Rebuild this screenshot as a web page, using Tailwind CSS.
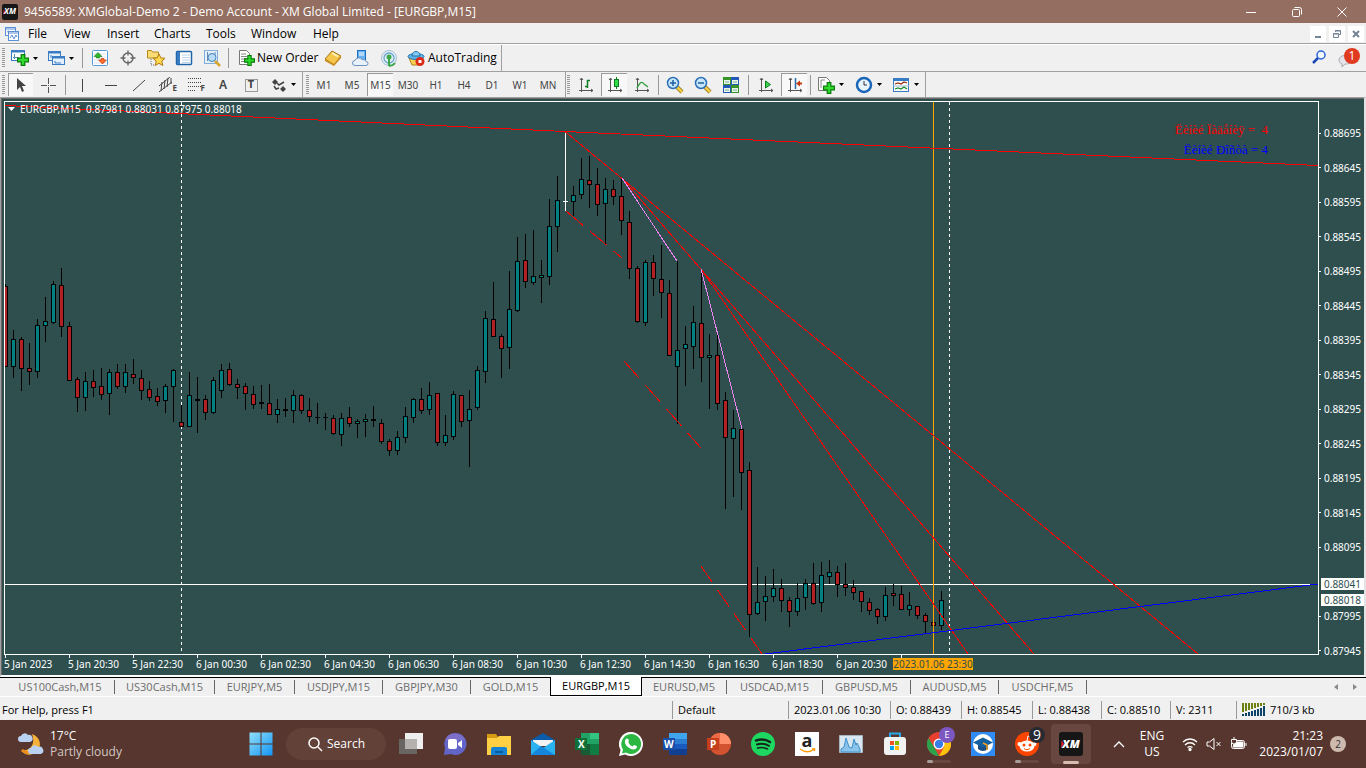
<!doctype html>
<html lang="en">
<head>
  <meta charset="UTF-8">
  <meta name="viewport" content="width=device-width, initial-scale=1.0">
  <title>9456589: XMGlobal-Demo 2 - Demo Account - XM Global Limited - [EURGBP,M15]</title>
  <script src="https://cdn.jsdelivr.net/npm/@tailwindcss/browser@4"></script>
</head>
<body class="flex h-screen flex-col overflow-hidden bg-[#f0f0f0] font-['Open_Sans','Noto_Sans',sans-serif] text-xs text-black">
  <!-- shared shapes -->
  <svg class="hidden">
    <symbol id="caret" viewBox="0 0 5 3"><path d="M0 0h5L2.500 3z"/></symbol>
    <symbol id="axes" viewBox="0 0 16 16"><path d="M3.500 1v14M1 13.500h14M2 3l1.500-2L5 3M13 12l2 1.500-2 1.500" fill="none" stroke="#555"/></symbol>
    <symbol id="plus" viewBox="0 0 10 10"><path d="M3.500.5h3v3h3v3h-3v3h-3v-3h-3v-3h3z" fill="#2edb2e" stroke="#087a08"/></symbol>
    <symbol id="xm" viewBox="0 0 24 24"><rect width="24" height="24" rx="3" fill="#161616"/><path d="M2.500 8l2.500 4-3 4z" fill="#e01f26"/></symbol>
  </svg>

  <!-- Title bar -->
  <header class="flex h-[23px] shrink-0 items-center bg-[#946e60] text-white">
    <div class="relative ml-0.5 mr-1.5 flex h-4 w-4 items-center justify-center">
      <svg class="absolute h-4 w-4"><use href="#xm"/></svg>
      <span class="relative text-[8px] font-bold italic">XM</span>
    </div>
    <h1 class="text-xs">9456589: XMGlobal-Demo 2 - Demo Account - XM Global Limited - [EURGBP,M15]</h1>
    <div class="ml-auto flex h-full">
      <button class="flex w-[46px] items-center justify-center" aria-label="Minimize"><svg class="h-3 w-3" fill="none" stroke="#fff"><path d="M1 6.500h10"/></svg></button>
      <button class="flex w-[46px] items-center justify-center" aria-label="Restore"><svg class="h-3 w-3" fill="none" stroke="#fff"><rect x="1.500" y="3.500" width="7" height="7" rx="1"/><path d="M3.500 1.500h5a2 2 0 0 1 2 2v5"/></svg></button>
      <button class="mr-0.5 flex w-11 items-center justify-center" aria-label="Close"><svg class="h-3 w-3" fill="none" stroke="#fff"><path d="M1.500 1.500l9 9M10.500 1.500l-9 9"/></svg></button>
    </div>
  </header>

  <!-- Menu -->
  <nav class="flex h-[22px] shrink-0 items-center border-b border-white shadow-[inset_0_-1px_0_#a0a0a0]">
    <svg class="mx-1 h-4 w-4" fill="#fff" stroke="#5b8fd8"><rect x="1.500" y="1.500" width="10" height="8"/><path d="M1 3h11M3 6l2-1 1 2"/><rect x="4.500" y="5.500" width="10" height="9"/><path d="M4 7h11M6 12l2-3 2 4 2-4 1 2" fill="none"/></svg>
    <button class="ml-1 w-[36px] text-left">File</button>
    <button class="w-[43px] text-left">View</button>
    <button class="w-[47px] text-left">Insert</button>
    <button class="w-[52px] text-left">Charts</button>
    <button class="w-[45px] text-left">Tools</button>
    <button class="w-[62px] text-left">Window</button>
    <button class="text-left">Help</button>
    <div class="ml-auto mr-0.5 flex gap-[3px]">
      <button class="flex h-4 w-4 items-center justify-center bg-white" aria-label="Minimize chart"><svg class="h-2 w-2"><path d="M1 6h6v2H1z" fill="#738496"/></svg></button>
      <button class="flex h-4 w-4 items-center justify-center bg-white" aria-label="Restore chart"><svg class="h-2 w-2" fill="none" stroke="#738496"><path d="M2.500 2V.5h5v4H6M2 1h6M.5 3.500h5v4h-5zM0 4h6"/></svg></button>
      <button class="flex h-4 w-4 items-center justify-center bg-white" aria-label="Close chart"><svg class="h-2 w-2" stroke="#738496" stroke-width="2"><path d="M1 1l6 6M7 1L1 7"/></svg></button>
    </div>
  </nav>

  <!-- Standard toolbar -->
  <div class="flex h-[27px] shrink-0 items-center border-b border-[#a0a0a0]">
    <div class="flex h-full items-center border-r border-[#a0a0a0]">
      <svg class="ml-0.5 h-5 w-[3px]"><path d="M1.500 0v20" stroke="#999" stroke-width="3" stroke-dasharray="1 1"/></svg>
      <button class="flex w-[38px] items-center gap-1 pl-1.5" aria-label="New chart">
        <svg class="h-[18px] w-[18px]"><rect x=".5" y="1.500" width="13" height="10" fill="#fff" stroke="#3a7cc4"/><path d="M0 2.500h14" stroke="#3a7cc4" stroke-width="2"/><path d="M3.500 5v5M2 8.500h6" stroke="#5b8bb0"/><use href="#plus" x="6" y="5" width="12" height="12"/></svg>
        <svg class="h-[3px] w-[5px]"><use href="#caret"/></svg>
      </button>
      <button class="flex w-9 items-center gap-1 pl-1" aria-label="Profiles">
        <svg class="h-[18px] w-[18px]" fill="#e4f1fd" stroke="#3a7cc4"><rect x="1.500" y="2.500" width="12" height="9"/><path d="M1 3.500h13" stroke-width="2"/><rect x="5.500" y="7.500" width="12" height="8"/><path d="M5 8.500h13" stroke-width="2"/><path d="M4 6v3M8 12v2h6"/></svg>
        <svg class="h-[3px] w-[5px]"><use href="#caret"/></svg>
      </button>
      <div class="mx-[3px] h-5 w-px bg-[#999]"></div>
      <button class="flex w-7 justify-center" aria-label="Market Watch"><svg class="h-[18px] w-[18px]"><rect x="1.500" y="1.500" width="15" height="15" rx="1" fill="#fff" stroke="#4f9bdc"/><path d="M3 5h12M3 8h12M3 11h12M3 14h12" stroke="#dde"/><path d="M7 3.500l4 4H8.500V9h-3V7.500H3z" fill="#2fb82f" stroke="#0a7a0a" stroke-width=".6"/><path d="M11.500 15l4-4H13V9.500h-3V11H7.500z" fill="#ff6a2a" stroke="#b83200" stroke-width=".6"/></svg></button>
      <button class="flex w-7 justify-center" aria-label="Data window"><svg class="h-[18px] w-[18px]" fill="none" stroke="#666"><circle cx="9" cy="9" r="5" stroke-width="1.500"/><path d="M9 1.500v5M9 11.500v5M1.500 9h5M11.500 9h5" stroke-width="1.300"/></svg></button>
      <button class="flex w-7 justify-center" aria-label="Navigator"><svg class="h-5 w-5"><path d="M1.500 10V2.500h4l1 1.500h6v6z" fill="#f9dc73" stroke="#b5881a"/><path d="M5 11v6h4" fill="none" stroke="#666" stroke-dasharray="1 1"/><path d="M13 6l1.800 3.900 4.200.4-3.200 2.900 1 4.300-3.800-2.200L9.200 17.500l1-4.300L7 10.300l4.200-.4z" fill="#ffd84d" stroke="#b07a10"/></svg></button>
      <button class="flex w-7 justify-center" aria-label="Terminal"><svg class="h-[18px] w-[18px]"><rect x="1.500" y="2.500" width="15" height="13" rx="1" fill="#fff" stroke="#2164a8" stroke-width="1.500"/><path d="M2 3h3v12H2z" fill="#3a7cc4"/><path d="M7 6h8M7 8.500h8M7 11h8M7 13.500h8" stroke="#bcd3ea"/></svg></button>
      <button class="flex w-7 justify-center" aria-label="Strategy tester"><svg class="h-[18px] w-[18px]"><rect x="1.500" y="1.500" width="13" height="13" fill="#e4effa" stroke="#83aeda"/><path d="M4.500 3v9M4 6h1M8 4v4M12 3v5" stroke="#6a8bb0"/><circle cx="9" cy="8.500" r="4" fill="#b9dcf7" stroke="#4583b8"/><path d="M12 12l5 5" stroke="#d9a62c" stroke-width="2.500"/></svg></button>
      <div class="mx-0.5 h-5 w-px bg-[#999]"></div>
      <button class="flex w-[88px] items-center gap-0.5 pl-1.5">
        <svg class="h-[18px] w-[18px] shrink-0"><path d="M2.500 1.500h7l3 3v11h-10z" fill="#fff" stroke="#777"/><path d="M4 5h5M4 7.500h6M4 10h6M4 12.500h4" stroke="#888"/><use href="#plus" x="7" y="6" width="11" height="11"/></svg>
        <span class="whitespace-nowrap">New Order</span>
      </button>
      <button class="flex w-7 justify-center" aria-label="MetaEditor"><svg class="h-[18px] w-[18px]"><path d="M1 10l7-8 9 5-7 9z" fill="#f4c64c" stroke="#a8731a"/><path d="M1 10l9 5 7-8v2l-7 8-9-5z" fill="#c98c20"/><path d="M8 4l6 3.500" stroke="#fff3bd" stroke-width="2"/></svg></button>
      <button class="flex w-7 justify-center" aria-label="Hosting"><svg class="h-[18px] w-[18px]"><rect x="5.500" y="1.500" width="8" height="10" fill="#67b2f3" stroke="#1e6fc2"/><path d="M7 4h5M7 6h5" stroke="#fff"/><path d="M3 16.500a2.500 2.500 0 0 1 0-5 4 4 0 0 1 7-1 3.500 3.500 0 0 1 4 2 2 2 0 0 1 0 4z" fill="#e9f1fa" stroke="#6c93bf"/></svg></button>
      <button class="flex w-7 justify-center" aria-label="Signals"><svg class="h-[18px] w-[18px]" fill="none"><circle cx="9" cy="9" r="7.500" fill="#e3eef6" stroke="#a5bfd6"/><circle cx="9" cy="9" r="5" stroke="#6aa6c8" stroke-width="1.300"/><path d="M9 9v8M9 17a8 8 0 0 0 6-3" stroke="#3ba84a" stroke-width="2"/><circle cx="9" cy="8" r="2.500" fill="#3ba84a"/></svg></button>
      <button class="flex w-[98px] items-center gap-[3px] pl-1">
        <svg class="h-[18px] w-[18px] shrink-0"><path d="M2 9l3 7h7l4-7z" fill="#f7cf52" stroke="#b3841b"/><ellipse cx="9" cy="7.500" rx="8" ry="3" fill="#5db2e8" stroke="#2473ad"/><path d="M5 7c0-6 8-6 8 0z" fill="#86cbf3" stroke="#2473ad"/><circle cx="13" cy="12.500" r="4.500" fill="#dc2b18"/><path d="M11.500 11h3v3h-3z" fill="#fff"/></svg>
        <span class="whitespace-nowrap">AutoTrading</span>
      </button>
    </div>
    <div class="ml-auto flex items-center gap-2 pr-1.5">
      <button aria-label="Search"><svg class="h-[18px] w-[18px]" fill="none"><circle cx="11" cy="6" r="4" fill="#f4f9ff" stroke="#2b62d9" stroke-width="1.500"/><path d="M8 9l-5 5" stroke="#1a49b8" stroke-width="2.500"/></svg></button>
      <button class="relative h-5 w-6" aria-label="Messages">
        <svg class="h-5 w-6"><path d="M3 12c0-6 12-6 12 0 0 4-4 4-6 4l-3 3v-3c-2-1-3-2-3-4z" fill="#e3e3e8" stroke="#a9a9b2"/></svg>
        <span class="absolute right-0 top-0 flex h-4 w-4 items-center justify-center rounded-full bg-[#e03a20] text-xs text-white">1</span>
      </button>
    </div>
  </div>

  <!-- Line studies, periodicity and chart toolbars -->
  <div class="flex h-[25px] shrink-0 items-center font-['Noto_Sans',sans-serif] text-[10px] text-[#444]">
    <div class="flex h-full w-[303px] items-center border-r border-[#a0a0a0]">
      <svg class="ml-0.5 mr-px h-5 w-[3px]"><path d="M1.500 0v20" stroke="#999" stroke-width="3" stroke-dasharray="1 1"/></svg>
      <button class="ml-0.5 mr-px flex h-[23px] w-[25px] items-center justify-center border-l border-t border-[#999] bg-[#f8f8f8]" aria-label="Cursor"><svg class="h-4 w-4"><path d="M4 1v12l3-3 2 5 2-1-2-5h4z" fill="#444"/></svg></button>
      <button class="flex w-7 justify-center" aria-label="Crosshair"><svg class="h-4 w-4"><path d="M8.500 1v6M8.500 10v6M1 8.500h6M10 8.500h6M8 8.500h1" stroke="#555"/></svg></button>
      <div class="mx-[3px] h-5 w-px bg-[#999]"></div>
      <button class="flex w-7 justify-center" aria-label="Vertical line"><svg class="h-4 w-4"><path d="M7.500 2v13" stroke="#444"/></svg></button>
      <button class="flex w-7 justify-center" aria-label="Horizontal line"><svg class="h-4 w-4"><path d="M2 8.500h12" stroke="#444"/></svg></button>
      <button class="flex w-7 justify-center" aria-label="Trendline"><svg class="h-4 w-4"><path d="M2 14L14 3" stroke="#444"/></svg></button>
      <button class="relative flex w-7 justify-center" aria-label="Equidistant channel"><svg class="h-4 w-4" stroke="#444"><path d="M0 9L11 0M0 15L13 5M3 5l-1 9M6 3L5 12M9 1L8 10M12 1v6"/></svg><span class="absolute right-1 top-1.5 text-[8px] font-bold">E</span></button>
      <button class="relative flex w-7 justify-center" aria-label="Fibonacci"><svg class="h-4 w-4" stroke="#444" stroke-dasharray="1 1"><path d="M1 1.500h14M1 5.500h14M1 9.500h14M1 13.500h8"/></svg><span class="absolute right-1 top-1.5 text-[8px] font-bold">F</span></button>
      <button class="w-7 text-xs font-semibold">A</button>
      <button class="relative flex w-7 items-center justify-center" aria-label="Text label"><svg class="h-4 w-4" fill="none" stroke="#444" stroke-dasharray="1 1"><rect x="2.500" y="2.500" width="12" height="12"/></svg><span class="absolute text-[11px] font-bold">T</span></button>
      <button class="flex w-[36px] items-center gap-1 pl-1.5" aria-label="Arrows"><svg class="h-4 w-4" fill="#444"><path d="M4 2l3 3-3 3-3-3zM12 9l3 3-3 3-3-3z"/><path d="M6 6l2 2 5-3M3 9l2 3 3-1" fill="none" stroke="#444" stroke-width="1.500"/></svg><svg class="h-[3px] w-[5px]"><use href="#caret"/></svg></button>
    </div>
    <div class="flex h-full w-[263px] items-center border-r border-[#a0a0a0]">
      <svg class="ml-[3px] mr-px h-5 w-[3px]"><path d="M1.500 0v20" stroke="#999" stroke-width="3" stroke-dasharray="1 1"/></svg>
      <button class="w-7 pt-0.5">M1</button>
      <button class="w-7 pt-0.5">M5</button>
      <button class="mx-px h-[23px] w-[26px] border-l border-t border-[#999] bg-[#f8f8f8] pt-0.5">M15</button>
      <button class="w-7 pt-0.5">M30</button>
      <button class="w-7 pt-0.5">H1</button>
      <button class="w-7 pt-0.5">H4</button>
      <button class="w-7 pt-0.5">D1</button>
      <button class="w-7 pt-0.5">W1</button>
      <button class="w-7 pt-0.5">MN</button>
    </div>
    <div class="flex h-full w-[360px] items-center border-r border-[#a0a0a0]">
      <svg class="ml-px mr-0.5 h-5 w-[3px]"><path d="M1.500 0v20" stroke="#999" stroke-width="3" stroke-dasharray="1 1"/></svg>
      <button class="flex w-7 justify-center" aria-label="Bar chart"><svg class="h-4 w-4"><use href="#axes"/><path d="M9.500 3v8M7 9.500h2M9 3.500h3" stroke="#0a7d1e" stroke-width="1.500"/></svg></button>
      <button class="mx-px flex h-[23px] w-[26px] items-center justify-center border-l border-t border-[#999] bg-[#f8f8f8]" aria-label="Candlesticks"><svg class="h-4 w-4"><use href="#axes"/><path d="M9.500 0v12" stroke="#0a7d1e"/><rect x="7.500" y="2.500" width="4" height="7" fill="#2fdc4a" stroke="#0a7d1e"/></svg></button>
      <button class="flex w-7 justify-center" aria-label="Line chart"><svg class="h-4 w-4"><use href="#axes"/><path d="M3 11c3-6 5-7 7-4l4 3" fill="none" stroke="#2f9e3c" stroke-width="1.300"/></svg></button>
      <div class="mx-0.5 h-5 w-px bg-[#999]"></div>
      <button class="flex w-7 justify-center" aria-label="Zoom in"><svg class="h-[18px] w-[18px]"><path d="M11 11l5 5" stroke="#8f6a10" stroke-width="4"/><path d="M11 11l5 5" stroke="#f5cf46" stroke-width="2.500"/><circle cx="7" cy="7" r="5.500" fill="#c8e6fb" stroke="#2b6fb5" stroke-width="1.500"/><path d="M4 7h6M7 4v6" stroke="#1f5f9e" stroke-width="1.500"/></svg></button>
      <button class="flex w-7 justify-center" aria-label="Zoom out"><svg class="h-[18px] w-[18px]"><path d="M11 11l5 5" stroke="#8f6a10" stroke-width="4"/><path d="M11 11l5 5" stroke="#f5cf46" stroke-width="2.500"/><circle cx="7" cy="7" r="5.500" fill="#c8e6fb" stroke="#2b6fb5" stroke-width="1.500"/><path d="M4 7h6" stroke="#1f5f9e" stroke-width="1.500"/></svg></button>
      <button class="flex w-7 justify-center" aria-label="Tile windows"><svg class="h-4 w-4"><path d="M0 0h8v8H0zM8 8h8v8H8z" fill="#38922a"/><path d="M8 0h8v8H8zM0 8h8v8H0z" fill="#2458b8"/><path d="M1 3h6v4H1zM9 3h6v4H9zM1 11h6v4H1zM9 11h6v4H9z" fill="#e8f4e4"/><path d="M2 5h4M10 5h4M2 13h4M10 13h4" stroke="#7aa"/></svg></button>
      <div class="mx-[3px] h-5 w-px bg-[#999]"></div>
      <button class="flex w-7 justify-center" aria-label="Auto scroll"><svg class="h-4 w-4"><use href="#axes"/><path d="M7.500 4l5 3.500-5 3.500z" fill="#3bd24f" stroke="#0a7d1e"/></svg></button>
      <button class="mx-px flex h-[23px] w-[26px] items-center justify-center border-l border-t border-[#999] bg-[#f8f8f8]" aria-label="Chart shift"><svg class="h-4 w-4"><use href="#axes"/><path d="M8.500 1v11" stroke="#1f6fae" stroke-width="1.500"/><path d="M9 6.500l4-3v2h2v2h-2v2z" fill="#c23a10"/></svg></button>
      <div class="mx-0.5 h-5 w-px bg-[#999]"></div>
      <button class="flex w-[36px] items-center gap-1 pl-1" aria-label="Indicators"><svg class="h-[18px] w-[18px]"><path d="M1.500 1.500h8l3 3v10h-11z" fill="#fff" stroke="#777"/><path d="M4 4h4M4 4v8" stroke="#888"/><use href="#plus" x="6" y="6" width="12" height="12"/></svg><svg class="h-[3px] w-[5px]"><use href="#caret"/></svg></button>
      <button class="flex w-[37px] items-center gap-1 pl-1.5" aria-label="Periods"><svg class="h-[18px] w-[18px]"><circle cx="9" cy="9" r="7" fill="#e8f4fd" stroke="#1c66b8" stroke-width="2.500"/><path d="M9 5v4h3" fill="none" stroke="#333"/></svg><svg class="h-[3px] w-[5px]"><use href="#caret"/></svg></button>
      <button class="flex w-[36px] items-center gap-1 pl-1.5" aria-label="Templates"><svg class="h-[18px] w-[18px]" fill="none"><rect x="1.500" y="2.500" width="15" height="13" fill="#fff" stroke="#3a7cc4"/><path d="M1 3.500h16" stroke="#3a7cc4" stroke-width="3"/><path d="M1 10h16" stroke="#9bc"/><path d="M3 8l3-1 3 1 3-2 3 1" stroke="#9e2b0e" stroke-width="1.300"/><path d="M3 13l3-1 3 1 3-2 3 2" stroke="#1d8a2d" stroke-width="1.300"/></svg><svg class="h-[3px] w-[5px]"><use href="#caret"/></svg></button>
    </div>
  </div>

  <!-- Chart window -->
  <main class="flex min-h-0 flex-1 border-b-2 border-l border-r-2 border-t border-b-white border-l-[#a0a0a0] border-r-[#e3e3e3] border-t-[#a0a0a0] font-['Noto_Sans',sans-serif] text-[10px] leading-3 text-white">
    <div class="grid min-w-0 flex-1 grid-cols-[1fr_45px] grid-rows-[1fr_20px] border-l border-t border-[#696969] bg-[#2f4f4f] pl-0.5 pt-0.5">
      <div class="relative min-h-0 border border-white">
        <svg id="plot" class="absolute h-full w-full" viewBox="5 102 1313 552" preserveAspectRatio="none" shape-rendering="crispEdges" fill="none">
          <path d="M181.500 102v552M949.500 102v552" stroke="#fff" stroke-dasharray="3 3"/>
          <path d="M5 584.500h1313" stroke="#fff"/>
          <g id="candles"></g>
          <path d="M565.500 132v79M563 201.500h5" stroke="#fff"/>
          <path d="M933.500 102v552" stroke="#ffa500"/>
          <g stroke="red">
            <path d="M5 105.500L565 131.500L1318 165.500M565 131.500L1198 654M622 178L1034 654M701 269L968 654"/>
            <path d="M566 211l56 47" stroke-dasharray="22 9"/>
            <path d="M624 361l77 87" stroke-dasharray="23 9"/>
            <path d="M701 566l61 88" stroke-dasharray="20 9"/>
          </g>
          <path d="M622 178l55 83M701 269l41 160" stroke="violet"/>
          <path d="M765 654L1318 584" stroke="#00f"/>
        </svg>
        <div class="relative flex items-center gap-1 pl-[3px] pt-px">
          <svg class="h-1 w-[7px]"><path d="M0 0h7L3.500 4z" fill="#fff"/></svg>
          <span class="whitespace-pre pl-px">EURGBP,M15  0.87981 0.88031 0.87975 0.88018</span>
        </div>
        <div class="absolute right-[50px] top-[18px] text-right font-['Liberation_Serif',serif] text-[13px] leading-5">
          <p class="whitespace-pre text-[#f00]">Ëèíèé Ïàäåíèÿ =  4</p>
          <p class="text-[#00f]">Ëèíèé Ðîñòà = 4</p>
        </div>
      </div>
      <!-- Price axis -->
      <div class="relative">
        <div id="prices" class="flex h-full translate-y-[15px] flex-col pb-0.5"></div>
        <span class="absolute left-0.5 top-[477px] h-3 bg-white px-[3px] text-[#2f4f4f]">0.88041</span>
        <span class="absolute left-0.5 top-[493px] h-3 bg-white px-[3px] text-[#2f4f4f]">0.88018</span>
      </div>
      <!-- Time axis -->
      <div class="relative">
        <div id="times" class="flex"></div>
        <span class="absolute left-[889px] top-[3px] h-3 w-20 bg-[#ffa500] text-center text-[#2f4f4f]">2023.01.06 23:30</span>
      </div>
    </div>
  </main>

  <!-- Chart tabs -->
  <div class="flex h-5 shrink-0 border-b border-white text-[11px] text-[#6d6d6d]">
    <div class="w-3.5 border-t border-black"></div>
    <button class="flex w-[101px] items-center border-t border-black"><span class="flex-1 pr-2">US100Cash,M15</span><i class="h-3.5 w-px bg-[#666]"></i></button>
    <button class="flex w-[100px] items-center border-t border-black"><span class="flex-1">US30Cash,M15</span><i class="h-3.5 w-px bg-[#666]"></i></button>
    <button class="flex w-20 items-center border-t border-black"><span class="flex-1">EURJPY,M5</span><i class="h-3.5 w-px bg-[#666]"></i></button>
    <button class="flex w-[88px] items-center border-t border-black"><span class="flex-1">USDJPY,M15</span><i class="h-3.5 w-px bg-[#666]"></i></button>
    <button class="flex w-[88px] items-center border-t border-black"><span class="flex-1">GBPJPY,M30</span><i class="h-3.5 w-px bg-[#666]"></i></button>
    <button class="flex w-[79px] items-center border-t border-black"><span class="flex-1">GOLD,M15</span></button>
    <button class="w-[92px] border-x border-b border-black bg-white text-black">EURGBP,M15</button>
    <button class="flex w-[85px] items-center border-t border-black"><span class="flex-1">EURUSD,M5</span><i class="h-3.5 w-px bg-[#666]"></i></button>
    <button class="flex w-24 items-center border-t border-black"><span class="flex-1">USDCAD,M15</span><i class="h-3.5 w-px bg-[#666]"></i></button>
    <button class="flex w-[88px] items-center border-t border-black"><span class="flex-1">GBPUSD,M5</span><i class="h-3.5 w-px bg-[#666]"></i></button>
    <button class="flex w-[88px] items-center border-t border-black"><span class="flex-1">AUDUSD,M5</span><i class="h-3.5 w-px bg-[#666]"></i></button>
    <button class="flex w-[88px] items-center border-t border-black"><span class="flex-1">USDCHF,M5</span><i class="h-3.5 w-px bg-[#666]"></i></button>
    <div class="flex flex-1 items-center justify-end gap-[15px] border-t border-black pr-[9px]">
      <button aria-label="Scroll left"><svg class="h-1.5 w-1" fill="#888"><path d="M4 0v6L0 3z"/></svg></button>
      <button aria-label="Scroll right"><svg class="h-1.5 w-1" fill="#888"><path d="M0 0v6l4-3z"/></svg></button>
    </div>
  </div>

  <!-- Status bar -->
  <footer class="flex h-[23px] shrink-0 items-center pt-0.5 text-[11px] leading-[18px]">
    <span class="flex-1 pl-0.5">For Help, press F1</span>
    <span class="w-[116px] border-l border-[#999] pl-[5px]">Default</span>
    <span class="w-[102px] whitespace-nowrap border-l border-[#999] pl-[5px]">2023.01.06 10:30</span>
    <span class="w-[71px] whitespace-nowrap border-l border-[#999] pl-[5px]">O: 0.88439</span>
    <span class="w-[71px] whitespace-nowrap border-l border-[#999] pl-[5px]">H: 0.88545</span>
    <span class="w-[69px] whitespace-nowrap border-l border-[#999] pl-[5px]">L: 0.88438</span>
    <span class="w-[69px] whitespace-nowrap border-l border-[#999] pl-[5px]">C: 0.88510</span>
    <span class="w-[66px] whitespace-nowrap border-l border-[#999] pl-[5px]">V: 2311</span>
    <span class="flex w-[130px] items-center gap-1 border-l border-[#999] pl-[5px]">
      <svg class="h-[13px] w-6"><path d="M1 0v9M4 0v8M7 0v7M10 0v6M13 0v5M16 0v4M19 0v3M22 0v2" stroke="#6b8010" stroke-width="2"/><path d="M1 11v2M4 10v3M7 9v4M10 8v5M13 7v6M16 6v7M19 5v8M22 3v10" stroke="#0b4468" stroke-width="2"/></svg>
      710/3 kb
    </span>
  </footer>

  <!-- Windows taskbar -->
  <div class="flex h-12 shrink-0 items-center bg-[#56362e] text-white">
    <button class="flex w-[239px] items-center gap-1.5 pl-[18px] text-left text-xs leading-4">
      <svg class="h-6 w-[26px]"><path d="M14 2c9 3 11 14 3 19-5 3-11 2-14-3 9 2 15-6 11-16z" fill="#f6b13b"/><path d="M4 18c4 4 9 3 12 1" stroke="#ef8b1a" stroke-width="3" fill="none"/><path d="M3 10a3 3 0 0 1 0-6 4 4 0 0 1 7-1 3 3 0 0 1 2 7z" fill="#b9d2f2"/><path d="M13 22a3 3 0 0 1 0-6 4 4 0 0 1 7-1 3 3 0 0 1 3 7z" fill="#b9d2f2"/></svg>
      <span>17°C<br><span class="text-[#d3c6c2]">Partly cloudy</span></span>
    </button>
    <button class="flex w-11 justify-center" aria-label="Start"><svg class="h-6 w-6"><defs><linearGradient id="win" x2="1" y2="1"><stop stop-color="#8fe0fb"/><stop offset="1" stop-color="#1495f3"/></linearGradient></defs><path d="M.5.5h11v11H.5zM12.500.5h11v11h-11zM.5 12.500h11v11H.5zM12.500 12.500h11v11h-11z" fill="url(#win)"/></svg></button>
    <button class="mx-[3px] flex h-8 w-[100px] items-center justify-center gap-1 rounded-full bg-[#624139]"><svg class="h-4 w-4" fill="none" stroke="#fff" stroke-width="1.500"><circle cx="7" cy="7" r="5"/><path d="M11 11l4 4"/></svg>Search</button>
    <button class="flex w-11 justify-center" aria-label="Task view"><svg class="h-6 w-6"><path d="M6 1h18v16H6z" fill="#efefef"/><path d="M0 7h18v15H0z" fill="#696563"/><path d="M6 7h12v10H6z" fill="#b5b1af"/></svg></button>
    <button class="flex w-11 justify-center" aria-label="Chat"><svg class="h-6 w-6"><path d="M12 1a11 11 0 1 1-4 21l-7 1 1-7A11 11 0 0 1 12 1z" fill="#6264c7"/><path d="M2 8a11 11 0 0 1 20 0z" fill="#8f78c8" opacity=".6"/><rect x="5" y="7" width="9" height="10" rx="2" fill="#fff"/><path d="M15 11l4-3v8l-4-3z" fill="#fff"/></svg></button>
    <button class="flex w-11 justify-center" aria-label="File Explorer"><svg class="h-6 w-6"><path d="M0 2h9l2 3h12v8H0z" fill="#d69b13"/><path d="M0 6h10l2-2h12v19H0z" fill="#ffd044"/><path d="M4 23v-6a2 2 0 0 1 2-2h12a2 2 0 0 1 2 2v6z" fill="#1583d3"/><path d="M8 19h8v2H8z" fill="#0b5b9b"/></svg></button>
    <button class="flex w-11 justify-center" aria-label="Mail"><svg class="h-6 w-6"><path d="M0 8l12-7 12 7v5H0z" fill="#0b5ba8"/><path d="M2 8h20v6H2z" fill="#f2f2f2"/><path d="M0 8l12 8 12-8v15H0z" fill="#2bb2f0"/><path d="M0 23l10-9 14 9z" fill="#1685dc"/></svg></button>
    <button class="flex w-11 justify-center" aria-label="Excel"><svg class="h-6 w-6"><path d="M6 1h18v22H6z" fill="#21a366"/><path d="M15 1h9v6h-9z" fill="#33c481"/><path d="M6 12h18v11H6z" fill="#107c41"/><path d="M6 12h9v11H6z" fill="#185c37"/><path d="M0 6h12v12H0z" fill="#0f7138"/><text x="3" y="16" fill="#fff" font-size="10" font-weight="700">X</text></svg></button>
    <button class="flex w-11 justify-center" aria-label="WhatsApp"><svg class="h-6 w-6"><path d="M12 0a12 12 0 1 1-6 22.400L0 24l1.600-6A12 12 0 0 1 12 0z" fill="#fff"/><path d="M12 2a10 10 0 1 1-5 18.600L3 21.500l1-4A10 10 0 0 1 12 2z" fill="#2cb742"/><path d="M8 6.500c2 0 2 3 1.500 4 1 2 2 3 4 4l1.500-1.500c2 .5 3 1 3 2-1 3-4 3-7 1.500S5.500 12 6 9c.3-1.500 1-2.500 2-2.500z" fill="#fff"/></svg></button>
    <button class="flex w-11 justify-center" aria-label="Word"><svg class="h-6 w-6"><path d="M6 1h18v6H6z" fill="#41a5ee"/><path d="M6 7h18v5H6z" fill="#2b7cd3"/><path d="M6 12h18v5H6z" fill="#185abd"/><path d="M6 17h18v6H6z" fill="#103f91"/><path d="M0 6h12v12H0z" fill="#174fa8"/><text x="1" y="16" fill="#fff" font-size="10" font-weight="700">W</text></svg></button>
    <button class="flex w-11 justify-center" aria-label="PowerPoint"><svg class="h-6 w-6"><circle cx="13" cy="12" r="11" fill="#d35230"/><path d="M13 1a11 11 0 0 1 11 11H13z" fill="#ff8f6b"/><path d="M2 12A11 11 0 0 1 13 1v11z" fill="#ed6c47"/><path d="M0 6h12v12H0z" fill="#c43e1c"/><text x="3" y="16" fill="#fff" font-size="10" font-weight="700">P</text></svg></button>
    <button class="flex w-11 justify-center" aria-label="Spotify"><svg class="h-6 w-6" fill="none" stroke="#15251a" stroke-linecap="round"><circle cx="12" cy="12" r="12" fill="#1ed760" stroke="none"/><path d="M5 8.500c5-1.500 10-1 14 1.500" stroke-width="2.500"/><path d="M6 12.500c4-1.300 8-.8 12 1.300" stroke-width="2"/><path d="M6.500 16c4-1 7-.5 10 1" stroke-width="1.600"/></svg></button>
    <button class="relative flex w-11 justify-center" aria-label="Amazon">
      <svg class="h-6 w-6"><path d="M0 0h24v24H0z" fill="#fff"/><path d="M5 17c5 3.500 10 3.500 14 0M17 17h2.500v2" fill="none" stroke="#f90" stroke-width="1.500"/></svg>
      <span class="absolute -top-1 text-lg leading-6 font-bold text-[#222]">a</span>
    </button>
    <button class="flex w-11 justify-center" aria-label="Task Manager"><svg class="h-6 w-6"><path d="M.5 3.500h23v17H.5z" fill="#d8e7f2" stroke="#a7b5be"/><path d="M2 17l3-2 2-9 3 9 3 1 2-9 2 6 1-2 3 6v3H2z" fill="#8cc3ea" stroke="#3c90cb"/></svg></button>
    <button class="flex w-11 justify-center" aria-label="Microsoft Store"><svg class="h-6 w-6"><path d="M7 6V1.500h10V6" fill="none" stroke="#29a9e8" stroke-width="2"/><rect x="1" y="5" width="22" height="18" rx="3" fill="#f2f2f2"/><path d="M7 9h4v4H7z" fill="#f25022"/><path d="M12 9h4v4h-4z" fill="#7fba00"/><path d="M7 14h4v4H7z" fill="#00a4ef"/><path d="M12 14h4v4h-4z" fill="#ffb900"/></svg></button>
    <button class="relative flex w-11 justify-center" aria-label="Chrome">
      <svg class="h-6 w-6"><circle cx="12" cy="12" r="12" fill="#e8402f"/><path d="M1.600 6L7 15l5 9A12 12 0 0 1 1.600 6z" fill="#2ba24c"/><path d="M12 24l5-9V7h6a12 12 0 0 1-11 17z" fill="#fdc40f"/><circle cx="12" cy="12" r="5.500" fill="#fff"/><circle cx="12" cy="12" r="4.200" fill="#3b7de8"/></svg>
      <span class="absolute right-1.5 -top-[5px] flex h-4 w-4 items-center justify-center rounded-full bg-[#7d57c1] text-[9px]">E</span>
      <i class="absolute left-2.5 top-7 h-[3px] w-6 rounded bg-[#674840]"></i><i class="absolute left-2.5 top-7 h-[3px] w-1.5 rounded bg-[#a99d99]"></i>
    </button>
    <button class="flex w-11 justify-center" aria-label="Courses"><svg class="h-6 w-6"><path d="M0 0h24v24H0z" fill="#2f8cf5"/><circle cx="12" cy="12" r="10" fill="#fff"/><path d="M7 12v5c3 2.500 7 2.500 10 0v-5z" fill="#1d4d87"/><path d="M12 5.500l10 5-10 5-10-5z" fill="#15609f"/><path d="M12 11l4 2v5" fill="none" stroke="#f3a01c" stroke-width="1.500"/></svg></button>
    <button class="relative flex w-11 justify-center" aria-label="Reddit">
      <svg class="h-6 w-6"><circle cx="12" cy="12" r="12" fill="#ff4500"/><ellipse cx="12" cy="14" rx="7.500" ry="5.500" fill="#fff"/><circle cx="4.500" cy="12" r="2" fill="#fff"/><circle cx="19.500" cy="12" r="2" fill="#fff"/><path d="M12 9l1-5 4 1" fill="none" stroke="#fff"/><circle cx="9" cy="13" r="1.500" fill="#ff4500"/><circle cx="15" cy="13" r="1.500" fill="#ff4500"/><path d="M9 16.500c2 1.500 4 1.500 6 0" fill="none" stroke="#ff4500"/></svg>
      <span class="absolute right-1 -top-[5px] flex h-4 w-4 items-center justify-center rounded-full bg-[#272a33] text-sm">9</span>
      <i class="absolute left-2.5 top-7 h-[3px] w-6 rounded bg-[#674840]"></i><i class="absolute left-2.5 top-7 h-[3px] w-1.5 rounded bg-[#a99d99]"></i>
    </button>
    <button class="relative mx-0.5 flex h-10 w-10 items-center justify-center rounded bg-[#67473f]" aria-label="XM terminal">
      <svg class="absolute h-6 w-6"><use href="#xm"/></svg>
      <span class="relative text-[11px] font-extrabold italic">XM</span>
      <i class="absolute bottom-0 left-3 h-[3px] w-4 rounded bg-[#d5bdb0]"></i>
    </button>

    <div class="ml-auto flex items-center text-xs leading-4">
      <button class="mr-[13px] flex" aria-label="Hidden icons"><svg class="h-3 w-3" fill="none" stroke="#fff" stroke-width="1.300"><path d="M1 9l5-5 5 5"/></svg></button>
      <button class="w-7 text-center">ENG US</button>
      <button class="ml-4 flex items-center gap-2" aria-label="Network, sound and battery">
        <svg class="h-4 w-4" fill="none" stroke="#fff" stroke-width="1.300"><path d="M1 6c4-4 10-4 14 0M3 9c3-3 7-3 10 0M5.500 11.500c2-1.500 3-1.500 5 0"/><circle cx="8" cy="13.500" r="1" fill="#fff"/></svg>
        <svg class="h-4 w-4" fill="none" stroke="#fff"><path d="M1 6h2.500L8 2.500v11L3.500 10H1zM10.500 6l4 4M14.500 6l-4 4"/></svg>
        <svg class="h-4 w-[17px]" fill="none" stroke="#fff"><rect x="1.500" y="4.500" width="13" height="8" rx="2"/><path d="M5 6h8v5H3z" fill="#fff"/><path d="M16 7v3"/><path d="M4 1v3M1.500 3.500h5v2a2 2 0 0 1-5 0zM4 8v3" fill="#56362e"/></svg>
      </button>
      <button class="ml-3 w-16 text-right">21:23<br>2023/01/07</button>
      <button class="ml-[7px] mr-5 flex h-4 w-4 items-center justify-center rounded-full bg-[#cdb9ae] text-[10px] text-[#333]">2</button>
    </div>
  </div>

  <script>
    // [high, top, bottom, low, type], one bar every 8px. u = up, d = down, n = flat
    const bars = [
      [284,286,367,367,'d'],[330,339,367,378,'u'],[337,339,369,391,'d'],[343,368,372,385,'d'],[319,325,372,378,'u'],
      [297,321,326,342,'u'],[281,284,323,324,'u'],[268,285,327,337,'d'],[322,326,381,381,'d'],[377,379,398,412,'d'],
      [372,381,398,411,'u'],[370,381,388,397,'d'],[368,386,395,400,'d'],[369,372,394,415,'u'],[364,372,387,389,'d'],
      [364,372,387,393,'u'],[359,374,378,384,'d'],[370,378,391,400,'d'],[381,389,398,401,'d'],[388,396,402,406,'d'],
      [384,386,401,413,'u'],[369,370,387,422,'u'],[405,422,427,427,'d'],[372,395,427,427,'u'],[377,399,401,433,'n'],
      [395,399,413,420,'d'],[377,380,413,414,'u'],[364,370,391,398,'u'],[363,369,385,386,'d'],[379,384,388,399,'d'],
      [383,386,394,410,'d'],[386,394,405,409,'d'],[385,402,404,409,'n'],[384,403,415,415,'d'],[399,409,415,423,'u'],
      [398,409,411,417,'n'],[390,395,411,423,'u'],[394,395,411,414,'d'],[398,410,417,422,'d'],[403,417,418,424,'n'],
      [413,417,418,430,'n'],[415,418,434,435,'d'],[413,418,435,446,'u'],[407,417,424,427,'d'],[419,421,424,438,'u'],
      [414,419,422,437,'u'],[406,419,421,427,'n'],[419,423,442,444,'d'],[439,441,451,456,'d'],[431,437,451,455,'u'],
      [407,416,438,443,'u'],[398,399,418,423,'u'],[388,399,411,414,'d'],[382,395,410,415,'u'],[393,393,443,446,'d'],
      [415,435,443,446,'u'],[391,394,437,440,'u'],[395,395,422,427,'d'],[390,409,421,467,'u'],[366,370,408,410,'u'],
      [311,318,372,383,'u'],[282,319,337,337,'d'],[334,336,349,378,'d'],[271,309,348,369,'u'],[237,261,311,312,'u'],
      [234,260,282,288,'d'],[230,276,283,285,'u'],[260,275,278,303,'u'],[199,226,277,285,'u'],[176,200,227,252,'u'],
      null,[186,195,202,216,'u'],[158,179,195,199,'u'],[156,180,185,208,'d'],[168,184,205,216,'d'],
      [178,189,204,244,'u'],[180,189,197,205,'d'],[178,196,221,235,'d'],[211,222,269,279,'d'],[266,268,322,323,'d'],
      [260,262,323,326,'u'],[255,262,279,296,'d'],[245,279,293,318,'d'],[280,293,356,356,'d'],[261,350,367,424,'u'],
      [326,344,349,386,'u'],[306,322,347,369,'u'],[270,323,358,382,'d'],[334,355,358,409,'u'],[335,355,404,410,'d'],
      [392,400,438,509,'d'],[410,428,439,497,'u'],[429,429,473,510,'d'],[462,470,615,637,'d'],[567,602,614,615,'u'],
      [576,596,602,621,'u'],[569,588,597,602,'u'],[579,588,601,612,'d'],[597,600,612,627,'d'],[583,598,612,616,'u'],
      [579,583,598,610,'u'],[563,583,604,605,'d'],[562,575,603,612,'u'],[560,572,577,584,'u'],[566,572,585,597,'d'],
      [563,584,588,596,'d'],[580,587,593,600,'d'],[591,591,602,612,'d'],[598,602,611,615,'d'],[608,609,617,624,'d'],
      [587,595,617,621,'u'],[584,593,596,606,'d'],[586,594,610,610,'d'],[592,605,610,616,'u'],[606,606,616,619,'d'],
      [613,615,622,633,'d'],[622,622,626,626,'d'],[591,600,626,630,'u']
    ];
    const colors = {u: '#008080', d: '#b22222', n: '#000'};
    let out = '';
    bars.forEach((b, i) => {
      if (!b) return;
      const x = 5 + i * 8;
      const [high, top, bottom, low, type] = b;
      out += `<rect x="${x}" y="${high}" width="1" height="${low - high}" fill="#000"/>`;
      out += `<rect x="${x - 2}" y="${top}" width="5" height="${bottom - top}" fill="#000"/>`;
      if (type != 'n') out += `<rect x="${x - 1}" y="${top + 1}" width="3" height="${bottom - top - 2}" fill="${colors[type]}"/>`;
    });
    document.getElementById('candles').innerHTML = out;

    const prices = document.getElementById('prices');
    for (let i = 0; i < 16; i++) {
      const price = i == 13 ? '' : ((88695 - i * 50) / 100000).toFixed(5);
      prices.innerHTML += `<div class="flex flex-1 items-center gap-[3px]"><i class="h-px w-0.5 ${price ? 'bg-white' : ''}"></i>${price}</div>`;
    }

    const times = ['5 Jan 2023', '5 Jan 20:30', '5 Jan 22:30', '6 Jan 00:30', '6 Jan 02:30', '6 Jan 04:30', '6 Jan 06:30',
      '6 Jan 08:30', '6 Jan 10:30', '6 Jan 12:30', '6 Jan 14:30', '6 Jan 16:30', '6 Jan 18:30', '6 Jan 20:30', ''];
    document.getElementById('times').innerHTML = times.map(t =>
      `<div class="w-16 shrink-0 whitespace-nowrap"><i class="ml-px block h-[3px] w-px bg-white"></i>${t}</div>`).join('');
  </script>
</body>
</html>
